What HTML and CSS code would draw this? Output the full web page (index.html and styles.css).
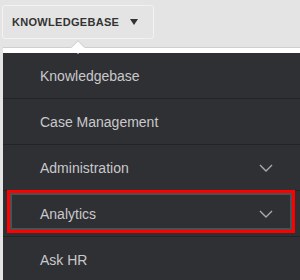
FILE: index.html
```html
<!DOCTYPE html>
<html lang="en">
<head>
    <meta charset="UTF-8">
    <title>Knowledgebase menu</title>
    <link rel="stylesheet" href="styles.css">
</head>
<body>
    <div class="topbar">
        <button class="menuButton">KNOWLEDGEBASE <span class="arrow"></span></button>
    </div>

    <div class="dropdown">
        <span class="caret"></span>
        <ul class="menuList">
            <li class="menuItem">Knowledgebase</li>
            <li class="menuItem">Case Management</li>
            <li class="menuItem">Administration
                <svg class="chevron" width="14" height="8" viewBox="0 0 14 8"><polyline points="1,1 7,7 13,1" /></svg>
            </li>
            <li class="menuItem selected">Analytics
                <svg class="chevron" width="14" height="8" viewBox="0 0 14 8"><polyline points="1,1 7,7 13,1" /></svg>
            </li>
            <li class="menuItem">Ask HR</li>
        </ul>
    </div>
</body>
</html>
```

FILE: styles.css
```css
body {
    margin: 0;
    background-color: #e4e4e4;
    font-family: "Liberation Sans", Arial, sans-serif;
    overflow: hidden;
}

.topbar {
    padding: 5px 0 0 2px;
    height: 42px;
}

.menuButton {
    display: flex;
    align-items: center;
    gap: 11px;
    width: 152px;
    height: 34px;
    padding: 0 0 0 9px;
    background-color: #e4e4e4;
    border: 1px solid #f2f2f2;
    border-radius: 3px;
    font-family: inherit;
    font-size: 11px;
    font-weight: bold;
    letter-spacing: 0.3px;
    color: #333;
}

.arrow {
    width: 0;
    height: 0;
    border-left: 4.5px solid transparent;
    border-right: 4.5px solid transparent;
    border-top: 6px solid #333;
}

.dropdown {
    position: relative;
    margin-left: 3px;
    border-top: 1px solid #cfcfcf;
    padding-top: 5px;
    background-color: #fff;
}

.caret {
    position: absolute;
    left: 70px;
    top: -6px;
    width: 9px;
    height: 9px;
    background-color: #fff;
    border-top: 1px solid #cfcfcf;
    border-left: 1px solid #cfcfcf;
    transform: rotate(45deg);
}

.menuList {
    list-style: none;
    margin: 0;
    padding: 0;
    background-color: #2f3034;
}

.menuItem {
    position: relative;
    display: flex;
    align-items: center;
    justify-content: space-between;
    height: 45px;
    padding: 0 27px 0 37px;
    border-bottom: 1px solid #232427;
    font-size: 14px;
    color: #c9c9cb;
}

.chevron polyline {
    fill: none;
    stroke: #a9aaad;
    stroke-width: 1.4;
}

.selected::after {
    content: "";
    position: absolute;
    left: 4px;
    right: 5px;
    top: -1px;
    bottom: 3px;
    border: 3px solid #ff0000;
    box-shadow: inset 0 0 0 2px #4e4f53;
}
```
